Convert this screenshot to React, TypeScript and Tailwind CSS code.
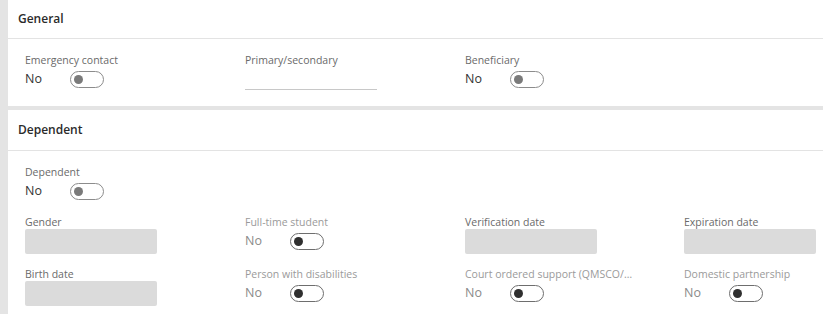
import React from 'react';

type Tone = 'disabled' | 'readonly';

function Toggle({ tone }: { tone: Tone }) {
  const border = tone === 'disabled' ? 'border-[#8c8c8c]' : 'border-[#6e6e6e]';
  const knob = tone === 'disabled' ? 'bg-[#7a7a7a]' : 'bg-[#2f2f2f]';
  return (
    <span className={`flex h-[17px] w-[34px] items-center rounded-full border ${border} bg-white pl-[3px]`}>
      <span className={`h-[9px] w-[9px] rounded-full ${knob}`} />
    </span>
  );
}

function Label({ text, light, truncate }: { text: string; light?: boolean; truncate?: boolean }) {
  return (
    <div
      className={`h-[14px] text-[10.5px] leading-[14px] ${light ? 'text-[#9a9a9a]' : 'text-[#6a6a6a]'} ${
        truncate ? 'max-w-[168px] truncate' : ''
      }`}
    >
      {text}
    </div>
  );
}

function ToggleField({ label, tone, truncate }: { label: string; tone: Tone; truncate?: boolean }) {
  const light = tone === 'readonly';
  return (
    <div className="flex flex-col">
      <Label text={label} light={light} truncate={truncate} />
      <div className="flex h-[25px] items-center">
        <span className={`w-[45px] text-[12.5px] ${light ? 'text-[#8a8a8a]' : 'text-[#333]'}`}>No</span>
        <Toggle tone={tone} />
      </div>
    </div>
  );
}

function BoxField({ label }: { label: string }) {
  return (
    <div className="flex flex-col">
      <Label text={label} />
      <div className="h-[25px] w-[132px] rounded-[2px] bg-[#dbdbdb]" />
    </div>
  );
}

function LineField({ label }: { label: string }) {
  return (
    <div className="flex flex-col">
      <Label text={label} />
      <div className="h-[25px]">
        <div className="h-[23px] w-[132px] border-b border-[#c8c8c8]" />
      </div>
    </div>
  );
}

function Header({ title, tall }: { title: string; tall?: boolean }) {
  return (
    <header
      className={`flex ${tall ? 'h-[41px]' : 'h-[39px]'} items-center border-b border-[#e3e3e3] pl-[10px] text-[12px] font-semibold text-[#2b2b2b]`}
    >
      {title}
    </header>
  );
}

export default function App() {
  return (
    <div
      className="min-h-[314px] w-[823px] overflow-hidden bg-[#e4e4e4] pl-[8px]"
      style={{ fontFamily: '"Open Sans", "Noto Sans", Arial, sans-serif' }}
    >
      <section className="bg-white">
        <Header title="General" />
        <div className="grid grid-cols-[220px_220px_220px_1fr] pt-[14px] pb-[14px] pl-[17px]">
          <ToggleField label="Emergency contact" tone="disabled" />
          <LineField label="Primary/secondary" />
          <ToggleField label="Beneficiary" tone="disabled" />
        </div>
      </section>

      <section className="mt-[4px] bg-white">
        <Header title="Dependent" tall />
        <div className="pt-[14px] pl-[17px] pb-[10px]">
          <ToggleField label="Dependent" tone="disabled" />
          <div className="mt-[11px] grid grid-cols-[220px_220px_219px_1fr] gap-y-[13px]">
            <BoxField label="Gender" />
            <ToggleField label="Full-time student" tone="readonly" />
            <BoxField label="Verification date" />
            <BoxField label="Expiration date" />
            <BoxField label="Birth date" />
            <ToggleField label="Person with disabilities" tone="readonly" />
            <ToggleField label="Court ordered support (QMSCO/QDRO) eligible" tone="readonly" truncate />
            <ToggleField label="Domestic partnership" tone="readonly" />
          </div>
        </div>
      </section>
    </div>
  );
}
